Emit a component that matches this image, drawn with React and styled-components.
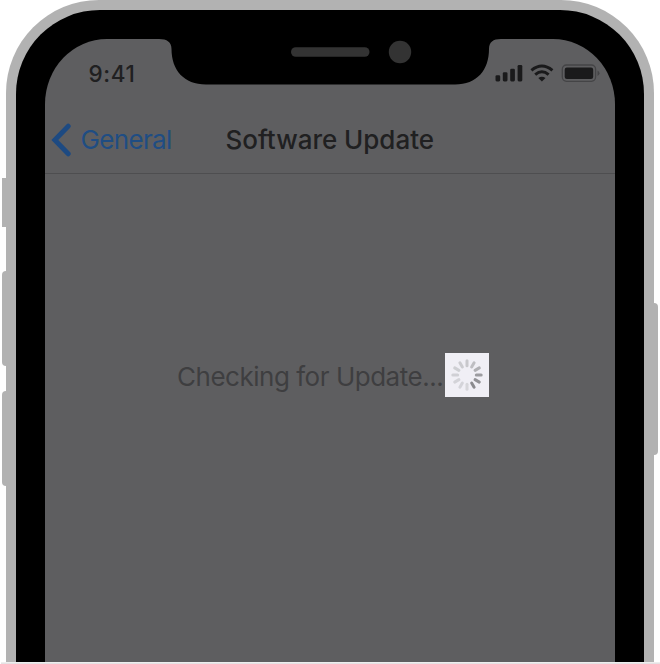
import React from 'react';
import styled, { createGlobalStyle } from 'styled-components';

const GlobalStyle = createGlobalStyle`
  * { box-sizing: border-box; }
  body { margin: 0; background: #fff; font-family: Inter, "Liberation Sans", sans-serif; }
`;

const Page = styled.main`
  position: relative;
  width: 660px;
  height: 664px;
  overflow: hidden;
  background: #fff;
`;

const Viewport = styled.div`
  height: 662px;
  padding: 0 6px;
  overflow: hidden;
`;

const Shell = styled.div`
  height: 662px;
  padding: 10px 10px 0;
  background: #b2b2b2;
  border-radius: 93px 93px 0 0;
`;

const Bezel = styled.div`
  height: 652px;
  padding: 29px 29px 0;
  background: #000;
  border-radius: 84px 84px 0 0;
`;

const Screen = styled.div`
  position: relative;
  display: flex;
  flex-direction: column;
  height: 623px;
  background: #5e5e60;
  border-radius: 62px 62px 0 0 / 65px 65px 0 0;
`;

const SideButton = styled.span`
  position: absolute;
  width: 5px;
  top: ${(p) => p.$top}px;
  height: ${(p) => p.$height}px;
  ${(p) => (p.$right ? 'right: 2px;' : 'left: 2px;')}
  background: #b2b2b2;
  border-radius: ${(p) => (p.$square ? '0' : p.$right ? '0 4px 4px 0' : '4px 0 0 4px')};
`;

const Notch = styled.svg`
  position: absolute;
  left: 114px;
  top: -1px;
`;

const StatusBar = styled.header`
  display: flex;
  justify-content: space-between;
  height: 63px;
  padding: 20px 14px 0 43.5px;
`;

const Clock = styled.time`
  font-size: 22.5px;
  font-weight: 550;
  line-height: 30px;
  letter-spacing: 0.6px;
  color: #202021;
`;

const StatusIcons = styled.svg`
  margin-top: 4px;
`;

const NavBar = styled.nav`
  display: flex;
  align-items: center;
  height: 72px;
  padding: 4px 6px 0;
  border-bottom: 1px solid #4e4e50;
`;

const Back = styled.a`
  display: flex;
  align-items: center;
  gap: 9.5px;
  width: 174.5px;
  color: #1f4d83;
  font-size: 26px;
  line-height: 34px;
  letter-spacing: -0.65px;
`;

const Title = styled.h1`
  margin: 0;
  font-size: 26px;
  font-weight: 550;
  line-height: 34px;
  white-space: nowrap;
  color: #202021;
  letter-spacing: -0.02px;
`;

const Content = styled.section`
  display: flex;
  align-items: center;
  height: 44px;
  margin: 179px 0 0 132px;
`;

const Message = styled.p`
  width: 267.5px;
  margin: 0;
  padding-top: 3px;
  font-size: 26px;
  line-height: 34px;
  white-space: nowrap;
  color: #3e3e40;
  letter-spacing: -0.48px;
`;

const SpinnerTile = styled.div`
  width: 44.5px;
  height: 44px;
  flex: none;
  background: #f0eff5;
`;

const BottomRule = styled.div`
  height: 2px;
  margin-left: 1px;
  background: linear-gradient(#eee 50%, #e4e2e4 50%);
`;

// Spoke shades, clockwise from twelve o'clock.
const SPOKES = ['#c8c8cc', '#bebec2', '#b0b0b4', '#9c9ca0', '#929296', '#8a8a8e', '#d6d6da', '#d4d4d9', '#d3d3d8', '#d0d0d5', '#cecfd3', '#cbcbcf'];

function Spinner() {
  return (
    <svg width="44" height="44" viewBox="0 0 44 44">
      {SPOKES.map((color, i) => (
        <line
          key={i}
          x1="22" y1="7.800" x2="22" y2="12.700"
          stroke={color}
          strokeWidth="3"
          strokeLinecap="round"
          transform={`rotate(${i * 30} 22 22)`}
        />
      ))}
    </svg>
  );
}

export default function App() {
  return (
    <Page>
      <GlobalStyle />
      <SideButton $top={178} $height={49} $square />
      <SideButton $top={271} $height={95} />
      <SideButton $top={391} $height={95} />
      <SideButton $top={303} $height={152} $right />
      <Viewport>
        <Shell>
          <Bezel>
            <Screen>
              <Notch width="342" height="47" viewBox="159 38 342 47">
                <path d="M159 38V39C167 39 171.500 42 171.500 49C171.500 70 184 84.500 206 84.500H455C477 84.500 489 70 489 49C489 42 493 39 501 39V38Z" fill="#000" />
                <rect x="291" y="47.200" width="78.500" height="9.600" rx="4.800" fill="#333" />
                <circle cx="400" cy="52" r="11.200" fill="#333" />
              </Notch>
              <StatusBar>
                <Clock>9:41</Clock>
                <StatusIcons width="106" height="20" viewBox="495 63 106 20">
                  <g fill="#1a1a1b">
                    <rect x="495.500" y="75.200" width="4.700" height="6.200" rx="1.300" />
                    <rect x="502.800" y="72.300" width="4.700" height="9.100" rx="1.300" />
                    <rect x="510.200" y="68.700" width="4.700" height="12.700" rx="1.300" />
                    <rect x="517.600" y="65" width="4.700" height="16.400" rx="1.300" />
                    <path d="M538.300 77.900Q541.900 75.400 545.500 77.900L541.900 81.500Z" />
                  </g>
                  <path d="M531.400 70.300Q541.900 61.800 552.400 70.300M535.200 74.600Q541.900 69 548.600 74.600" fill="none" stroke="#1a1a1b" strokeWidth="3" />
                  <rect x="562.300" y="65" width="33.300" height="16.300" rx="4.200" fill="none" stroke="#444446" strokeWidth="1.300" />
                  <rect x="564.700" y="67.500" width="28.500" height="11.500" rx="2.200" fill="#1a1a1b" />
                  <path d="M597.500 70.500Q599.500 71.500 599.500 73.200T597.500 76Z" fill="#444446" />
                </StatusIcons>
              </StatusBar>
              <NavBar>
                <Back>
                  <svg width="20" height="34" viewBox="0 0 20 34">
                    <path d="M17.200 3.200L3.800 17L17.200 30.800" fill="none" stroke="#1d4a82" strokeWidth="4.900" strokeLinecap="round" strokeLinejoin="miter" />
                  </svg>
                  General
                </Back>
                <Title>Software Update</Title>
              </NavBar>
              <Content>
                <Message>Checking for Update...</Message>
                <SpinnerTile><Spinner /></SpinnerTile>
              </Content>
            </Screen>
          </Bezel>
        </Shell>
      </Viewport>
      <BottomRule />
    </Page>
  );
}
